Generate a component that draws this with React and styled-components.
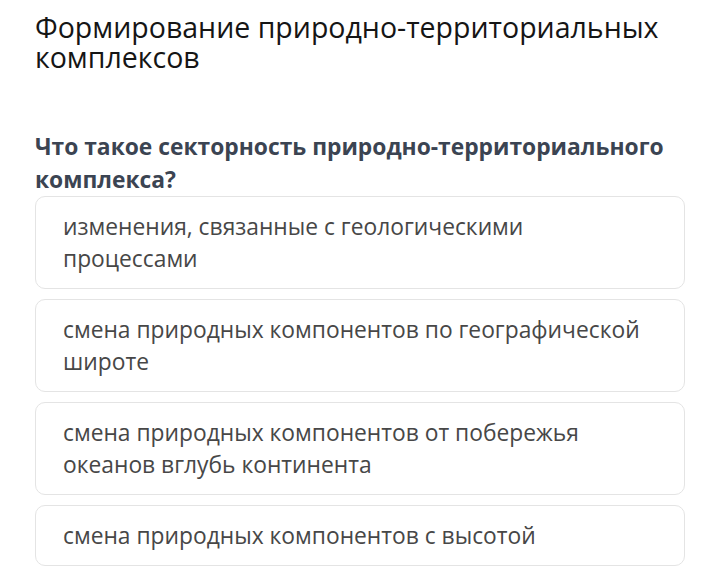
import React from 'react'
import styled, { createGlobalStyle } from 'styled-components'

const GlobalStyle = createGlobalStyle`
  html, body {
    margin: 0;
    padding: 0;
    background: #fff;
  }
  body {
    font-family: "Open Sans", "Noto Sans", sans-serif;
  }
`

const Page = styled.div`
  width: 720px;
  height: 586px;
  box-sizing: border-box;
  padding: 12px 35px 0 35px;
  overflow: hidden;
`

const Title = styled.h1`
  margin: 0;
  font-size: 28.5px;
  font-weight: 400;
  line-height: 30px;
  color: #151515;
`

const Question = styled.h2`
  margin: 58px 0 0;
  font-size: 22.8px;
  font-weight: 700;
  line-height: 33px;
  color: #3b4452;
`

const Options = styled.div`
  display: flex;
  flex-direction: column;
  gap: 10px;
`

const Option = styled.div`
  border: 1px solid #e4e4e4;
  border-radius: 10px;
  padding: 14px 28px 13px 27px;
  font-size: 22.8px;
  line-height: 32px;
  color: #474747;
`

const answers = [
  'изменения, связанные с геологическими процессами',
  'смена природных компонентов по географической широте',
  'смена природных компонентов от побережья океанов вглубь континента',
  'смена природных компонентов с высотой',
]

export default function App() {
  return (
    <Page>
      <GlobalStyle />
      <Title>Формирование природно-территориальных комплексов</Title>
      <Question>Что такое секторность природно-территориального комплекса?</Question>
      <Options>
        {answers.map(a => (
          <Option key={a}>{a}</Option>
        ))}
      </Options>
    </Page>
  )
}
